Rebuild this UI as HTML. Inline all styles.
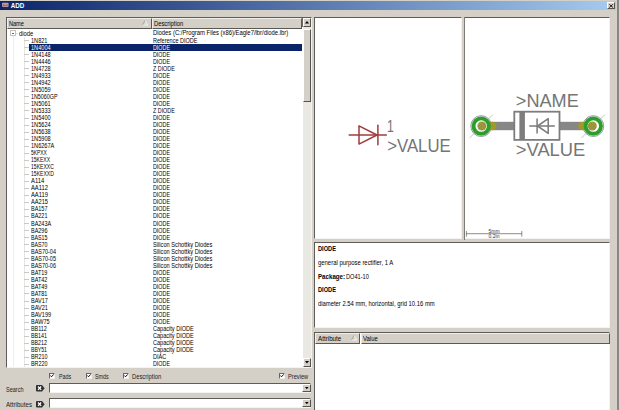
<!DOCTYPE html>
<html><head><meta charset="utf-8"><title>ADD</title>
<style>
html,body{margin:0;padding:0}
body{width:619px;height:410px;overflow:hidden;background:#d4d0c8;position:relative;font-family:"Liberation Sans","DejaVu Sans",sans-serif;font-size:6.5px;color:#000;line-height:7px}
div,span,i,b{position:absolute;box-sizing:border-box;white-space:nowrap}
svg{position:absolute;overflow:visible}
#win-r{left:617px;top:0;width:2px;height:410px;background:#8a8884}
#title{left:.2px;top:1px;width:615.5px;height:9.1px;background:linear-gradient(90deg,#0a246a,#a6caf0)}
#ttxt{left:10.7px;top:1.9px;color:#fff;font-weight:bold;font-size:6.3px;line-height:7px}
#close{left:606.8px;top:2.3px;width:8.2px;height:6.8px;background:#d4d0c8;border-top:.5px solid #fff;border-left:.5px solid #fff;border-right:1px solid #55534f;border-bottom:1px solid #55534f}
.sunk{background:#fff;border-top:1px solid #5e5c58;border-left:1px solid #5e5c58;border-right:.5px solid #f4f3f0;border-bottom:.5px solid #f4f3f0}
.hdr{background:#d4d0c8;border-top:.5px solid #f0efec;border-left:.5px solid #f0efec;border-right:1px solid #5a5854;border-bottom:1px solid #5a5854}
.hdr>span{top:1.7px}
.r{left:7px;width:295px;height:7.04px}
.r .n{left:24px;top:-.3px}
.t{left:0;top:0;transform-origin:0 0}
.r .d{left:146.2px;top:-.3px}
.r.sel::before{content:"";position:absolute;left:22.3px;right:0;top:0;bottom:0;background:#0a246a}
.r.sel span{color:#fff}
.dash{left:17px;top:3.3px;width:4.6px;height:.8px;background:#cbc9c5}
.btn{background:#d4d0c8;border-top:.5px solid #fff;border-left:.5px solid #fff;border-right:1px solid #55534f;border-bottom:1px solid #55534f}
.cb{width:6.2px;height:6.2px;background:#fff;border-top:1px solid #6a6864;border-left:1px solid #6a6864;border-right:.5px solid #eee;border-bottom:.5px solid #eee}
.lbl{color:#222}
</style></head><body>
<div id="win-r"></div>
<div id="title"></div>
<svg style="left:2px;top:2px" width="7" height="7.5" viewBox="0 0 7 7.5"><path d="M0.3 0.5H6.5V5.2Q6.5 7 3.4 7.3Q0.3 7 0.3 5.2Z" fill="#16224f"/><rect x="0.3" y="0.8" width="6.1" height="3.9" fill="#e6cfd2"/><rect x="0.9" y="1.5" width="4.9" height="2.5" fill="#c8454a"/><rect x="1.4" y="2.5" width="3.9" height=".6" fill="#eec8c8"/><path d="M1 5.6Q3.4 7 5.8 5.6" stroke="#5a5230" stroke-width=".4" fill="none"/></svg>
<div id="ttxt">ADD</div>
<div id="close"></div>
<svg style="left:608.6px;top:3.6px" width="4.2" height="3.8" viewBox="0 0 4.2 3.8"><path d="M0.3 0.3L3.9 3.5M3.9 0.3L0.3 3.5" stroke="#000" stroke-width=".85"/></svg>

<!-- tree -->
<div class="sunk" style="left:6px;top:17px;width:305.5px;height:350.6px"></div>
<div class="hdr" style="left:7px;top:17.8px;width:144.5px;height:11px"><span style="left:1px"><span class="t" style="transform:scaleX(0.856)">Name</span></span></div>
<svg style="left:141.9px;top:20.1px" width="6.2" height="5.6" viewBox="0 0 6.2 5.6"><path d="M5.8 5.2H0.4L3.1 0.4Z" fill="#d8d5ce" stroke="none"/><path d="M3.1 0.4L5.8 5.1H0.5" fill="none" stroke="#f6f5f2" stroke-width=".9"/><path d="M0.5 5.1L3.1 0.4" fill="none" stroke="#9b9892" stroke-width=".8"/></svg>
<div class="hdr" style="left:151.5px;top:17.8px;width:150.7px;height:11px"><span style="left:1.6px"><span class="t" style="transform:scaleX(0.897)">Description</span></span></div>
<!-- tree lines -->
<div style="left:12.7px;top:36px;width:.8px;height:331px;background:#eeedeb"></div>
<div style="left:23.6px;top:37px;width:.8px;height:330px;background:#e6e5e2"></div>
<div style="left:10.2px;top:30.4px;width:5.6px;height:5.3px;border:1px solid #c4c2be;background:#fff;border-radius:.6px"></div>
<div style="left:11.7px;top:32.6px;width:2.6px;height:.9px;background:#666"></div>
<div style="left:16px;top:32.8px;width:2.4px;height:.7px;background:#dddcd9"></div>
<div class="r" style="top:29.78px"><span class="n" style="left:12.3px;top:.2px"><span class="t" style="transform:scaleX(0.900)">diode</span></span><span class="d"><span class="t" style="transform:scaleX(0.904)">Diodes (C:/Program Files (x86)/Eagle7/lbr/diode.lbr)</span></span></div>
<div class="r" style="top:36.82px"><i class="dash"></i><span class="n"><span class="t" style="transform:scaleX(0.858)">1N821</span></span><span class="d"><span class="t" style="transform:scaleX(0.850)">Reference DIODE</span></span></div>
<div class="r sel" style="top:43.86px"><i class="dash"></i><span class="n"><span class="t" style="transform:scaleX(0.861)">1N4004</span></span><span class="d"><span class="t" style="transform:scaleX(0.824)">DIODE</span></span></div>
<div class="r" style="top:50.90px"><i class="dash"></i><span class="n"><span class="t" style="transform:scaleX(0.861)">1N4148</span></span><span class="d"><span class="t" style="transform:scaleX(0.824)">DIODE</span></span></div>
<div class="r" style="top:57.93px"><i class="dash"></i><span class="n"><span class="t" style="transform:scaleX(0.861)">1N4446</span></span><span class="d"><span class="t" style="transform:scaleX(0.824)">DIODE</span></span></div>
<div class="r" style="top:64.97px"><i class="dash"></i><span class="n"><span class="t" style="transform:scaleX(0.861)">1N4728</span></span><span class="d"><span class="t" style="transform:scaleX(0.824)">Z DIODE</span></span></div>
<div class="r" style="top:72.01px"><i class="dash"></i><span class="n"><span class="t" style="transform:scaleX(0.861)">1N4933</span></span><span class="d"><span class="t" style="transform:scaleX(0.824)">DIODE</span></span></div>
<div class="r" style="top:79.05px"><i class="dash"></i><span class="n"><span class="t" style="transform:scaleX(0.861)">1N4942</span></span><span class="d"><span class="t" style="transform:scaleX(0.824)">DIODE</span></span></div>
<div class="r" style="top:86.08px"><i class="dash"></i><span class="n"><span class="t" style="transform:scaleX(0.861)">1N5059</span></span><span class="d"><span class="t" style="transform:scaleX(0.824)">DIODE</span></span></div>
<div class="r" style="top:93.12px"><i class="dash"></i><span class="n"><span class="t" style="transform:scaleX(0.824)">1N5060GP</span></span><span class="d"><span class="t" style="transform:scaleX(0.824)">DIODE</span></span></div>
<div class="r" style="top:100.16px"><i class="dash"></i><span class="n"><span class="t" style="transform:scaleX(0.861)">1N5061</span></span><span class="d"><span class="t" style="transform:scaleX(0.824)">DIODE</span></span></div>
<div class="r" style="top:107.20px"><i class="dash"></i><span class="n"><span class="t" style="transform:scaleX(0.861)">1N5333</span></span><span class="d"><span class="t" style="transform:scaleX(0.824)">Z DIODE</span></span></div>
<div class="r" style="top:114.24px"><i class="dash"></i><span class="n"><span class="t" style="transform:scaleX(0.861)">1N5400</span></span><span class="d"><span class="t" style="transform:scaleX(0.824)">DIODE</span></span></div>
<div class="r" style="top:121.27px"><i class="dash"></i><span class="n"><span class="t" style="transform:scaleX(0.861)">1N5624</span></span><span class="d"><span class="t" style="transform:scaleX(0.824)">DIODE</span></span></div>
<div class="r" style="top:128.31px"><i class="dash"></i><span class="n"><span class="t" style="transform:scaleX(0.861)">1N5638</span></span><span class="d"><span class="t" style="transform:scaleX(0.824)">DIODE</span></span></div>
<div class="r" style="top:135.35px"><i class="dash"></i><span class="n"><span class="t" style="transform:scaleX(0.861)">1N5908</span></span><span class="d"><span class="t" style="transform:scaleX(0.824)">DIODE</span></span></div>
<div class="r" style="top:142.39px"><i class="dash"></i><span class="n"><span class="t" style="transform:scaleX(0.860)">1N6267A</span></span><span class="d"><span class="t" style="transform:scaleX(0.824)">DIODE</span></span></div>
<div class="r" style="top:149.43px"><i class="dash"></i><span class="n"><span class="t" style="transform:scaleX(0.759)">5KPXX</span></span><span class="d"><span class="t" style="transform:scaleX(0.824)">DIODE</span></span></div>
<div class="r" style="top:156.46px"><i class="dash"></i><span class="n"><span class="t" style="transform:scaleX(0.776)">15KEXX</span></span><span class="d"><span class="t" style="transform:scaleX(0.824)">DIODE</span></span></div>
<div class="r" style="top:163.50px"><i class="dash"></i><span class="n"><span class="t" style="transform:scaleX(0.779)">15KEXXC</span></span><span class="d"><span class="t" style="transform:scaleX(0.824)">DIODE</span></span></div>
<div class="r" style="top:170.54px"><i class="dash"></i><span class="n"><span class="t" style="transform:scaleX(0.779)">15KEXXD</span></span><span class="d"><span class="t" style="transform:scaleX(0.824)">DIODE</span></span></div>
<div class="r" style="top:177.58px"><i class="dash"></i><span class="n"><span class="t" style="transform:scaleX(0.901)">A114</span></span><span class="d"><span class="t" style="transform:scaleX(0.824)">DIODE</span></span></div>
<div class="r" style="top:184.62px"><i class="dash"></i><span class="n"><span class="t" style="transform:scaleX(0.891)">AA112</span></span><span class="d"><span class="t" style="transform:scaleX(0.824)">DIODE</span></span></div>
<div class="r" style="top:191.65px"><i class="dash"></i><span class="n"><span class="t" style="transform:scaleX(0.891)">AA119</span></span><span class="d"><span class="t" style="transform:scaleX(0.824)">DIODE</span></span></div>
<div class="r" style="top:198.69px"><i class="dash"></i><span class="n"><span class="t" style="transform:scaleX(0.869)">AA215</span></span><span class="d"><span class="t" style="transform:scaleX(0.824)">DIODE</span></span></div>
<div class="r" style="top:205.73px"><i class="dash"></i><span class="n"><span class="t" style="transform:scaleX(0.842)">BA157</span></span><span class="d"><span class="t" style="transform:scaleX(0.824)">DIODE</span></span></div>
<div class="r" style="top:212.77px"><i class="dash"></i><span class="n"><span class="t" style="transform:scaleX(0.842)">BA221</span></span><span class="d"><span class="t" style="transform:scaleX(0.824)">DIODE</span></span></div>
<div class="r" style="top:219.81px"><i class="dash"></i><span class="n"><span class="t" style="transform:scaleX(0.844)">BA243A</span></span><span class="d"><span class="t" style="transform:scaleX(0.824)">DIODE</span></span></div>
<div class="r" style="top:226.85px"><i class="dash"></i><span class="n"><span class="t" style="transform:scaleX(0.842)">BA296</span></span><span class="d"><span class="t" style="transform:scaleX(0.824)">DIODE</span></span></div>
<div class="r" style="top:233.88px"><i class="dash"></i><span class="n"><span class="t" style="transform:scaleX(0.812)">BAS15</span></span><span class="d"><span class="t" style="transform:scaleX(0.824)">DIODE</span></span></div>
<div class="r" style="top:240.92px"><i class="dash"></i><span class="n"><span class="t" style="transform:scaleX(0.812)">BAS70</span></span><span class="d"><span class="t" style="transform:scaleX(0.874)">Silicon Schottky Diodes</span></span></div>
<div class="r" style="top:247.96px"><i class="dash"></i><span class="n"><span class="t" style="transform:scaleX(0.841)">BAS70-04</span></span><span class="d"><span class="t" style="transform:scaleX(0.874)">Silicon Schottky Diodes</span></span></div>
<div class="r" style="top:255.00px"><i class="dash"></i><span class="n"><span class="t" style="transform:scaleX(0.841)">BAS70-05</span></span><span class="d"><span class="t" style="transform:scaleX(0.874)">Silicon Schottky Diodes</span></span></div>
<div class="r" style="top:262.04px"><i class="dash"></i><span class="n"><span class="t" style="transform:scaleX(0.841)">BAS70-06</span></span><span class="d"><span class="t" style="transform:scaleX(0.874)">Silicon Schottky Diodes</span></span></div>
<div class="r" style="top:269.07px"><i class="dash"></i><span class="n"><span class="t" style="transform:scaleX(0.847)">BAT19</span></span><span class="d"><span class="t" style="transform:scaleX(0.824)">DIODE</span></span></div>
<div class="r" style="top:276.11px"><i class="dash"></i><span class="n"><span class="t" style="transform:scaleX(0.847)">BAT42</span></span><span class="d"><span class="t" style="transform:scaleX(0.824)">DIODE</span></span></div>
<div class="r" style="top:283.15px"><i class="dash"></i><span class="n"><span class="t" style="transform:scaleX(0.847)">BAT49</span></span><span class="d"><span class="t" style="transform:scaleX(0.824)">DIODE</span></span></div>
<div class="r" style="top:290.19px"><i class="dash"></i><span class="n"><span class="t" style="transform:scaleX(0.847)">BAT81</span></span><span class="d"><span class="t" style="transform:scaleX(0.824)">DIODE</span></span></div>
<div class="r" style="top:297.23px"><i class="dash"></i><span class="n"><span class="t" style="transform:scaleX(0.859)">BAV17</span></span><span class="d"><span class="t" style="transform:scaleX(0.824)">DIODE</span></span></div>
<div class="r" style="top:304.26px"><i class="dash"></i><span class="n"><span class="t" style="transform:scaleX(0.859)">BAV21</span></span><span class="d"><span class="t" style="transform:scaleX(0.824)">DIODE</span></span></div>
<div class="r" style="top:311.30px"><i class="dash"></i><span class="n"><span class="t" style="transform:scaleX(0.862)">BAV199</span></span><span class="d"><span class="t" style="transform:scaleX(0.824)">DIODE</span></span></div>
<div class="r" style="top:318.34px"><i class="dash"></i><span class="n"><span class="t" style="transform:scaleX(0.851)">BAW75</span></span><span class="d"><span class="t" style="transform:scaleX(0.824)">DIODE</span></span></div>
<div class="r" style="top:325.38px"><i class="dash"></i><span class="n"><span class="t" style="transform:scaleX(0.835)">BB112</span></span><span class="d"><span class="t" style="transform:scaleX(0.856)">Capacity DIODE</span></span></div>
<div class="r" style="top:332.42px"><i class="dash"></i><span class="n"><span class="t" style="transform:scaleX(0.815)">BB141</span></span><span class="d"><span class="t" style="transform:scaleX(0.856)">Capacity DIODE</span></span></div>
<div class="r" style="top:339.45px"><i class="dash"></i><span class="n"><span class="t" style="transform:scaleX(0.815)">BB212</span></span><span class="d"><span class="t" style="transform:scaleX(0.856)">Capacity DIODE</span></span></div>
<div class="r" style="top:346.49px"><i class="dash"></i><span class="n"><span class="t" style="transform:scaleX(0.786)">BBY51</span></span><span class="d"><span class="t" style="transform:scaleX(0.856)">Capacity DIODE</span></span></div>
<div class="r" style="top:353.53px"><i class="dash"></i><span class="n"><span class="t" style="transform:scaleX(0.827)">BR210</span></span><span class="d"><span class="t" style="transform:scaleX(0.853)">DIAC</span></span></div>
<div class="r" style="top:360.57px"><i class="dash"></i><span class="n"><span class="t" style="transform:scaleX(0.827)">BR220</span></span><span class="d"><span class="t" style="transform:scaleX(0.824)">DIODE</span></span></div>
<div style="left:7px;top:367.1px;width:304px;height:.6px;background:#f4f3f0"></div>
<div style="left:0;top:367.7px;width:312px;height:5px;background:#d4d0c8"></div>
<!-- scrollbar -->
<div style="left:302.5px;top:18px;width:8.5px;height:349px;background:#eae8e3"></div>
<div class="btn" style="left:302.5px;top:18px;width:8.5px;height:9px"></div>
<div style="left:302.2px;top:18px;width:.7px;height:9px;background:#6f6d69"></div>
<svg style="left:304.7px;top:21.2px" width="4" height="2.5" viewBox="0 0 4 2.5"><path d="M2 0L4 2.5L0 2.5Z" fill="#000"/></svg>
<div class="btn" style="left:302.5px;top:29px;width:8.5px;height:72.5px"></div>
<div class="btn" style="left:302.5px;top:358px;width:8.5px;height:8.8px"></div>
<svg style="left:304.7px;top:361px" width="4" height="2.5" viewBox="0 0 4 2.5"><path d="M0 0L4 0L2 2.5Z" fill="#000"/></svg>

<!-- checkboxes -->
<div class="cb" style="left:49.2px;top:372.5px"></div><svg style="left:50.4px;top:373.8px" width="4" height="3.6" viewBox="0 0 4 3.6"><path d="M0.3 1.5L1.5 2.8L3.7 0.4" stroke="#000" stroke-width="1" fill="none"/></svg><div class="lbl" style="left:59px;top:372.6px"><span class="t" style="transform:scaleX(0.823)">Pads</span></div>
<div class="cb" style="left:86.1px;top:372.5px"></div><svg style="left:87.3px;top:373.8px" width="4" height="3.6" viewBox="0 0 4 3.6"><path d="M0.3 1.5L1.5 2.8L3.7 0.4" stroke="#000" stroke-width="1" fill="none"/></svg><div class="lbl" style="left:94.7px;top:372.6px"><span class="t" style="transform:scaleX(0.829)">Smds</span></div>
<div class="cb" style="left:122.7px;top:372.5px"></div><svg style="left:123.9px;top:373.8px" width="4" height="3.6" viewBox="0 0 4 3.6"><path d="M0.3 1.5L1.5 2.8L3.7 0.4" stroke="#000" stroke-width="1" fill="none"/></svg><div class="lbl" style="left:132.3px;top:372.6px"><span class="t" style="transform:scaleX(0.897)">Description</span></div>
<div class="cb" style="left:279.0px;top:372.5px"></div><svg style="left:280.2px;top:373.8px" width="4" height="3.6" viewBox="0 0 4 3.6"><path d="M0.3 1.5L1.5 2.8L3.7 0.4" stroke="#000" stroke-width="1" fill="none"/></svg><div class="lbl" style="left:288.3px;top:372.6px"><span class="t" style="transform:scaleX(0.871)">Preview</span></div>

<!-- search -->
<div class="lbl" style="left:5.5px;top:386px"><span class="t" style="transform:scaleX(0.849)">Search</span></div>
<svg style="left:36.4px;top:385.1px" width="8.6" height="6.4" viewBox="0 0 8.6 6.4"><path d="M0.8 0H6L8.6 3.2L6 6.4H0.8Q0 6.4 0 5.6V0.8Q0 0 0.8 0Z" fill="#2e2e2e"/><path d="M2 1.5L5.2 4.9M5.2 1.5L2 4.9" stroke="#fff" stroke-width="1.25"/></svg>
<div class="sunk" style="left:49.1px;top:383.4px;width:262.4px;height:9.3px"></div>
<div class="btn" style="left:302.3px;top:384.3px;width:8.4px;height:8px"></div>
<svg style="left:304.6px;top:387.2px" width="3.6" height="2.3" viewBox="0 0 4 2.5"><path d="M0 0L4 0L2 2.5Z" fill="#000"/></svg>
<div class="lbl" style="left:5.5px;top:400.5px"><span class="t" style="transform:scaleX(0.946)">Attributes</span></div>
<svg style="left:36.4px;top:400.7px" width="8.6" height="6.4" viewBox="0 0 8.6 6.4"><path d="M0.8 0H6L8.6 3.2L6 6.4H0.8Q0 6.4 0 5.6V0.8Q0 0 0.8 0Z" fill="#2e2e2e"/><path d="M2 1.5L5.2 4.9M5.2 1.5L2 4.9" stroke="#fff" stroke-width="1.25"/></svg>
<div class="sunk" style="left:49.1px;top:398px;width:262.4px;height:9.8px"></div>
<div class="btn" style="left:302.3px;top:399.2px;width:8.4px;height:8px"></div>
<svg style="left:304.6px;top:402px" width="3.6" height="2.3" viewBox="0 0 4 2.5"><path d="M0 0L4 0L2 2.5Z" fill="#000"/></svg>

<!-- symbol preview -->
<div class="sunk" style="left:314.3px;top:17px;width:148.2px;height:222.2px"></div>
<div style="left:464.1px;top:17px;width:1px;height:222.5px;background:#7d7b76"></div>
<div style="left:465px;top:17px;width:145.3px;height:222.2px;background:#fff;border-top:1px solid #5e5c58;border-right:.5px solid #f4f3f0;border-bottom:.5px solid #f4f3f0"></div>
<svg style="left:314px;top:17px" width="298" height="223" viewBox="314 17 298 223">
 <g stroke="#a33a3a" stroke-width="1.5" fill="none" stroke-linecap="round" stroke-linejoin="round">
  <path d="M349.2 135H386.3"/><path d="M359 125.9V144.1L377 135Z"/><path d="M377.9 125.2V144.8"/>
 </g>
 <g font-family="Liberation Sans, DejaVu Sans, sans-serif" fill="#757575">
  <text x="387" y="131.9" font-size="15.6" textLength="6.8" lengthAdjust="spacingAndGlyphs">1</text>
  <text x="387.2" y="151.5" font-size="17.5" textLength="63.5" lengthAdjust="spacingAndGlyphs">&gt;VALUE</text>
  <text x="515.8" y="106.9" font-size="17.8" textLength="63" lengthAdjust="spacingAndGlyphs">&gt;NAME</text>
  <text x="515.8" y="156.3" font-size="17.8" textLength="69.5" lengthAdjust="spacingAndGlyphs">&gt;VALUE</text>
 </g>
 <defs><pattern id="hx" width="2.4" height="2.4" patternUnits="userSpaceOnUse" patternTransform="rotate(45)"><rect width="2.4" height="2.4" fill="#a89f3e"/><path d="M0 0H2.4M0 0V2.4" stroke="#7f7a28" stroke-width=".7"/></pattern></defs>
 <!-- package -->
 <g>
  <rect x="492" y="121.8" width="22" height="8.4" fill="#878787"/>
  <rect x="559" y="121.8" width="22" height="8.4" fill="#878787"/>
  <rect x="514.3" y="111.7" width="45.2" height="28.2" fill="#fff" stroke="#7d7d7d" stroke-width="1.8"/>
  <rect x="519.4" y="111.7" width="5.5" height="28.2" fill="#7d7d7d"/>
  <g stroke="#7d7d7d" stroke-width="1.55" fill="none" stroke-linejoin="round"><path d="M529.3 126H554.8"/><path d="M537.1 118.4V133.6"/><path d="M548.2 118.6V133.4L537.6 126Z"/></g>
  <path d="M469.5 138L493 114.5M581.5 138L605 114.5" stroke="#a0a0a0" stroke-width=".6"/>
  <circle cx="481.2" cy="126.1" r="10.4" fill="#fff" stroke="#7a7a82" stroke-width=".8"/>
  <circle cx="593.3" cy="126.1" r="10.4" fill="#fff" stroke="#7a7a82" stroke-width=".8"/>
  <path d="M492.3 121.8h-3v8.4h3a4.2 4.2 0 0 0 0 -8.4z" fill="#a09a2c"/>
  <path d="M582.2 121.8h3v8.4h-3a4.2 4.2 0 0 1 0 -8.4z" fill="#a09a2c"/>
  <circle cx="481.2" cy="126.1" r="7.7" fill="none" stroke="#2b9f2b" stroke-width="3.9"/>
  <circle cx="593.3" cy="126.1" r="7.7" fill="none" stroke="#2b9f2b" stroke-width="3.9"/>
  <circle cx="481.9" cy="126" r="4.5" fill="url(#hx)"/>
  <circle cx="592.3" cy="126" r="4.5" fill="url(#hx)"/>
  <path d="M474 133.3L488.5 118.8M586 133.3L600.5 118.8" stroke="#8a8a6a" stroke-width=".5" opacity=".6"/>
 </g>
 <!-- scale -->
 <g stroke="#5a5a5a" stroke-width=".7" fill="none"><path d="M466.2 233.7H522M466.4 231V236.6M521.8 231V236.6"/></g>
 <text x="494" y="232.8" font-size="5" text-anchor="middle" fill="#334" font-family="Liberation Sans, sans-serif">5mm</text>
 <text x="494" y="238.4" font-size="5" text-anchor="middle" fill="#334" font-family="Liberation Sans, sans-serif">0.2in</text>
</svg>

<!-- description -->
<div class="sunk" style="left:314.3px;top:242px;width:296px;height:86.3px"></div>
<div style="left:317.5px;top:244.8px;font-weight:bold"><span class="t" style="transform:scaleX(0.875)">DIODE</span></div>
<div style="left:317.5px;top:258.6px"><span class="t" style="transform:scaleX(0.910)">general purpose rectifier, 1 A</span></div>
<div style="left:317.5px;top:273px;font-weight:bold"><span class="t" style="transform:scaleX(0.947)">Package:</span></div><div style="left:346.3px;top:273px"><span class="t" style="transform:scaleX(0.864)">DO41-10</span></div>
<div style="left:317.5px;top:285.8px;font-weight:bold"><span class="t" style="transform:scaleX(0.875)">DIODE</span></div>
<div style="left:317.5px;top:300px"><span class="t" style="transform:scaleX(0.902)">diameter 2.54 mm, horizontal, grid 10.16 mm</span></div>

<!-- attributes -->
<div class="sunk" style="left:314.3px;top:332.4px;width:296px;height:80px"></div>
<div class="hdr" style="left:315.3px;top:333.4px;width:45.2px;height:10.5px"><span style="left:1.6px;top:.8px"><span class="t" style="transform:scaleX(0.963)">Attribute</span></span></div>
<svg style="left:351.3px;top:335.4px" width="6.2" height="5.6" viewBox="0 0 6.2 5.6"><path d="M5.8 5.2H0.4L3.1 0.4Z" fill="#d8d5ce" stroke="none"/><path d="M3.1 0.4L5.8 5.1H0.5" fill="none" stroke="#f6f5f2" stroke-width=".9"/><path d="M0.5 5.1L3.1 0.4" fill="none" stroke="#9b9892" stroke-width=".8"/></svg>
<div class="hdr" style="left:360.5px;top:333.4px;width:249.2px;height:10.5px"><span style="left:1.7px;top:.8px"><span class="t" style="transform:scaleX(0.919)">Value</span></span></div>
</body></html>
